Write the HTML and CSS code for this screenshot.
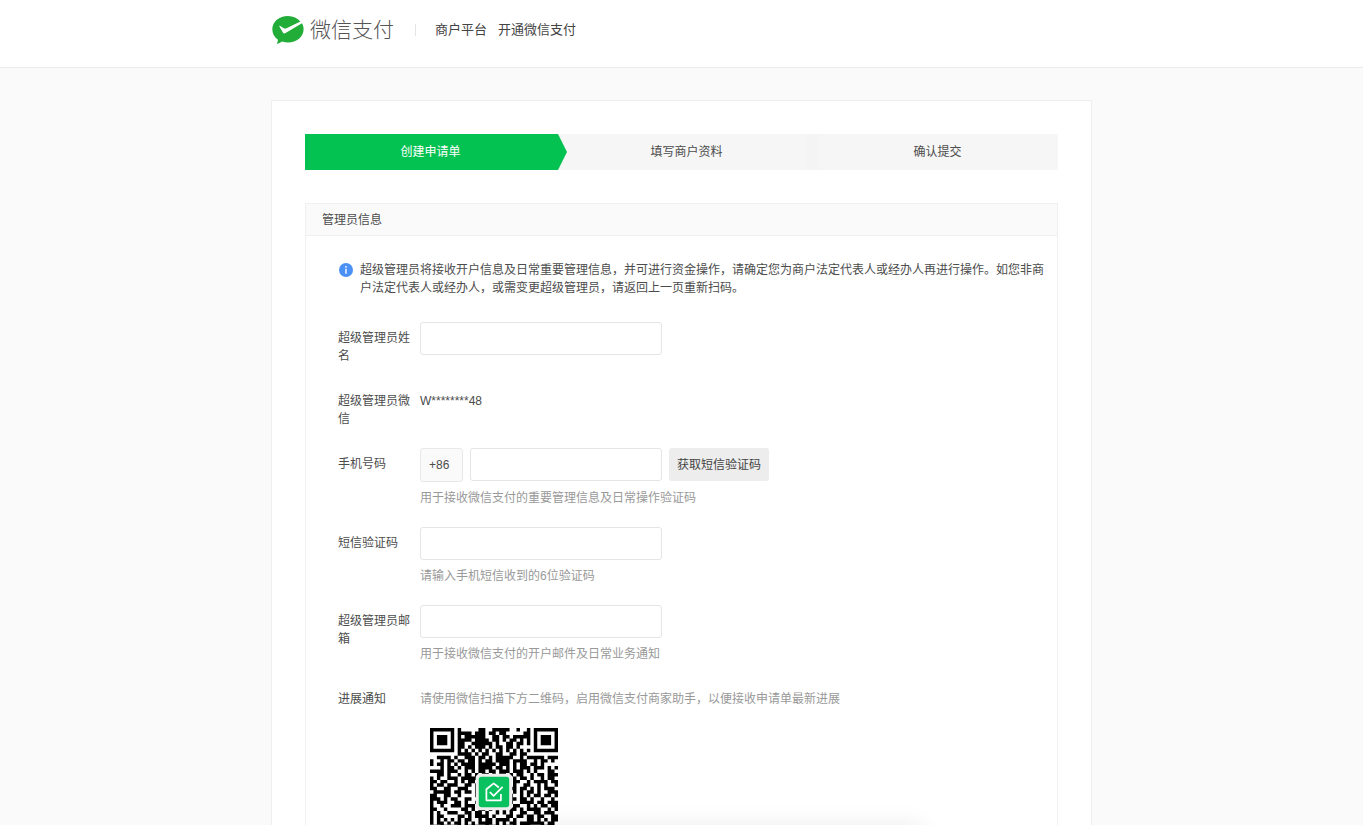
FILE: index.html
```html
<!DOCTYPE html>
<html lang="zh-CN">
<head>
<meta charset="utf-8">
<title>开通微信支付</title>
<link rel="stylesheet" href="styles.css">
</head>
<body>
<header class="header">
  <div class="header-inner">
    <a class="logo" href="#">
      <svg class="logo-icon" viewBox="0 0 32 28" aria-hidden="true">
        <path fill="#22ac38" d="M16 0C7.200 0 0.300 5.700 0.300 13.200c0 4.300 2.200 8 5.700 10.500L5.200 27.300c-.1.500.3.700.7.500l4.300-2.300c1.800.6 3.800.9 5.800.9 8.700 0 15.600-5.700 15.600-13.200 0-2.100-.6-4.100-1.600-5.900L13.600 17c-1.200.7-2.100.5-2.700-.6L7.400 10.600c-.3-.6.3-1 .8-.7l3.600 2.300c.7.4 1.400.5 2.100.2L28.400 5.600C25.500 2.200 21.100 0 16 0z"/>
      </svg>
      <span class="logo-text">微信支付</span>
    </a>
    <nav class="header-nav">
      <a href="#">商户平台</a>
      <span>开通微信支付</span>
    </nav>
  </div>
</header>

<main class="card">
  <ol class="steps">
    <li class="step step-active">创建申请单</li>
    <li class="step step-next">填写商户资料</li>
    <li class="step">确认提交</li>
  </ol>

  <section class="panel">
    <h2 class="panel-title">管理员信息</h2>
    <form class="panel-body">
      <div class="notice">
        <svg class="notice-icon" viewBox="0 0 14 14" aria-hidden="true">
          <circle cx="7" cy="7" r="7" fill="#4a90f5"/>
          <circle cx="7" cy="3.800" r="0.900" fill="#fff"/>
          <path d="M6.300 5.800h1.400v5H6.300z" fill="#fff"/>
        </svg>
        <p>超级管理员将接收开户信息及日常重要管理信息，并可进行资金操作，请确定您为商户法定代表人或经办人再进行操作。如您非商户法定代表人或经办人，或需变更超级管理员，请返回上一页重新扫码。</p>
      </div>

      <div class="row">
        <label class="label" for="admin-name">超级管理员姓名</label>
        <div class="field"><input class="input" id="admin-name" type="text"></div>
      </div>

      <div class="row">
        <span class="label">超级管理员微信</span>
        <div class="field"><span class="value">W********48</span></div>
      </div>

      <div class="row">
        <label class="label" for="phone">手机号码</label>
        <div class="field">
          <div class="controls">
            <div class="phone">
              <span class="prefix">+86</span>
              <input class="input" id="phone" type="tel">
            </div>
            <button class="button" type="button">获取短信验证码</button>
          </div>
          <p class="hint">用于接收微信支付的重要管理信息及日常操作验证码</p>
        </div>
      </div>

      <div class="row">
        <label class="label" for="sms-code">短信验证码</label>
        <div class="field">
          <input class="input" id="sms-code" type="text">
          <p class="hint">请输入手机短信收到的6位验证码</p>
        </div>
      </div>

      <div class="row">
        <label class="label" for="email">超级管理员邮箱</label>
        <div class="field">
          <input class="input" id="email" type="email">
          <p class="hint">用于接收微信支付的开户邮件及日常业务通知</p>
        </div>
      </div>

      <div class="row">
        <span class="label">进展通知</span>
        <div class="field">
          <p class="hint">请使用微信扫描下方二维码，启用微信支付商家助手，以便接收申请单最新进展</p>
          <svg class="qr" viewBox="0 0 37 37" role="img" aria-label="二维码">
            <path id="qr-modules" fill="#000"/>
            <rect x="13.200" y="13.200" width="10.600" height="10.600" rx="1.200" fill="#eee"/>
            <rect x="14.100" y="14.100" width="8.800" height="8.800" rx="0.800" fill="#0ac160"/>
            <path d="M19.900 17.200l-1.500-1.200-2.100 1.700v3.200h4.200v-1.800M17.300 18.500l1.100 1.100 2.600-2.600" fill="none" stroke="#fff" stroke-width="0.500" stroke-linejoin="round"/>
          </svg>
        </div>
      </div>
    </form>
  </section>
</main>
<div class="bottom-sheet"></div>
<script src="qr.js"></script>
</body>
</html>
```

FILE: styles.css
```css
* {
  box-sizing: border-box;
}

body {
  margin: 0;
  background: #fafafa;
  color: #4c4c4c;
  font: 12px/18px "Liberation Sans", "Noto Sans CJK SC", sans-serif;
}

p, h2, ol {
  margin: 0;
  padding: 0;
}

a {
  color: inherit;
  text-decoration: none;
}

.header {
  background: #fff;
  border-bottom: 1px solid #ebebeb;
}

.header-inner {
  display: flex;
  align-items: center;
  max-width: 819px;
  height: 67px;
  margin: 0 auto;
  padding-bottom: 7px;
}

.logo {
  display: flex;
  align-items: center;
  gap: 6px;
  padding-right: 21px;
}

.logo-icon {
  width: 32px;
  height: 28px;
}

.logo-text {
  font-size: 21px;
  font-weight: 300;
  line-height: 30px;
  color: #555;
}

.header-nav {
  position: relative;
  display: flex;
  gap: 11px;
  padding-left: 20px;
  font-size: 13px;
  color: #444;
}

.header-nav::before {
  content: "";
  position: absolute;
  left: 0;
  top: 3px;
  width: 1px;
  height: 12px;
  background: #e4e4e4;
}

.card {
  max-width: 821px;
  margin: 32px auto;
  padding: 33px;
  background: #fff;
  border: 1px solid #efeff1;
}

.steps {
  display: grid;
  grid-template-columns: repeat(3, 1fr);
  margin-bottom: 33px;
  list-style: none;
  background: #f6f6f6;
}

.step {
  position: relative;
  padding-left: 10px;
  line-height: 36px;
  text-align: center;
}

.step-active {
  padding-left: 0;
  background: #04c251;
  color: #fff;
}

.step-active::after {
  content: "";
  position: absolute;
  z-index: 1;
  left: calc(100% - 1px);
  top: 0;
  width: 12px;
  height: 100%;
  background: #04c251;
  clip-path: polygon(0 0, 3px 0, 100% 50%, 3px 100%, 0 100%);
}

.step-next::after {
  content: "";
  position: absolute;
  left: 100%;
  top: 0;
  width: 11px;
  height: 100%;
  background: #f4f4f4;
}

.panel {
  border: 1px solid #f0f0f0;
}

.panel-title {
  padding: 7px 16px 6px;
  background: #fafafa;
  border-bottom: 1px solid #f0f0f0;
  font-size: 12px;
  font-weight: 400;
  line-height: 18px;
}

.panel-body {
  display: flex;
  flex-direction: column;
  gap: 20px;
  padding: 25px 10px 32px 32px;
}

.notice {
  display: flex;
  gap: 7px;
  margin-bottom: 5px;
}

.notice-icon {
  flex: none;
  width: 14px;
  height: 14px;
  margin: 2px 0 0 1px;
}

.row {
  display: flex;
  gap: 10px;
}

.label {
  flex: none;
  width: 72px;
  padding-top: 7px;
}

.field {
  flex: 1;
}

.value {
  display: block;
  padding-top: 7px;
}

.controls {
  display: flex;
  gap: 7px;
}

.phone {
  display: flex;
  gap: 7px;
  width: 242px;
}

.input {
  display: block;
  width: 242px;
  min-width: 0;
  height: 33px;
  padding: 0 8px;
  background: #fff;
  border: 1px solid #e5e5e5;
  border-radius: 3px;
  font: inherit;
  color: inherit;
}

.prefix {
  flex: none;
  width: 43px;
  padding: 0 8px;
  background: #fafafa;
  border: 1px solid #e8e8e8;
  border-radius: 3px;
  line-height: 32px;
}

.button {
  height: 33px;
  padding: 0 8px;
  background: #ededed;
  border: 0;
  border-radius: 3px;
  font: inherit;
  color: #444;
}

.hint {
  padding-top: 7px;
  color: #999;
}

.qr {
  display: block;
  width: 128px;
  height: 128px;
  margin: 20px 0 0 10px;
}

.bottom-sheet {
  position: fixed;
  left: 50%;
  top: 100%;
  width: 480px;
  height: 60px;
  margin-left: -240px;
  box-shadow: 0 0 24px rgba(0, 0, 0, 0.08);
}
```

FILE: qr.js
```javascript
const rows = [
  "#######.#.....##..#####..#..#.#######",
  "#.....#.####.###.##.##.....##.#.....#",
  "#.###.#.#.######..##.##.#####.#.###.#",
  "#.###.#.####.####.##.#.##.#.#.#.###.#",
  "#.###.#.##..######.#..##.##.#.#.###.#",
  "#.....#.##.#.###.#.##.##.#....#.....#",
  "#######.#.#.#.#.#.#.#.#.#.#.#.#######",
  "........####.#.##..##..##.##.........",
  "..####.#..###.##.#.#####..#.#####.###",
  "#..#.##.##.##.#.##.####.####..#.##.#.",
  "#.##.#.#.####.#####.###.#.##.##.#....",
  "...#.##.#.###.####.##.#.#.###.###.#.#",
  "####.###..#.#.##.##.###.###.#.#...##.",
  "..##.#..#.##.#.##.#.##.#.##..#.##.###",
  "#.#..###.#####.######.#.#.##.#..#.##.",
  "##.##..#.#.##.##.##.###.##..#.####.##",
  "#.##.###..##.#.####.##..#..##..#.#..#",
  "##..##..###..#.######.###.##.#.#.###.",
  ".#####.##.##.#..##.#.#..#.#.##.#..###",
  "##..##..#....#.#.##.##.#..#.#.##.##.#",
  "###.#.##..##..#.###.#..##.##.#..#..#.",
  "#.###..##.#..##.##.#.#.#..####.##.###",
  "#..#..###.###.#...##.##.##..#.#.##.##",
  "##..#....##.#.##.#.#.#.##.#.####..#.#",
  "#.#..###..##.##.#..#.#.#..##..##.###.",
  "#.##....##.#.####.#...##.##.##.##..##",
  "#.#.#.#.#.##..#.##.####.#...##.#.#.##",
  "#.##.#.##.#.#.####.#.#.##.#######.##.",
  ".#.##.#.#.####..#.##.##.#.###...####.",
  "........#.#.##.##.#..##.#.#.#...#.##.",
  "#######.##.#.#.###.##.#..##.#.#.##.##",
  "#.....#.#.##.##..#.#.##.#.###...#..#.",
  "#.###.#..#.##.#.##.##.##.##.#####.##.",
  "#.###.#.##..##.#.##..#.##..#.##.#.#.#",
  "#.###.#..##.#.##.#.##.#.##.##.##..##.",
  "#.....#.#.##.#.##.##.#.#.##..#.##.#.#",
  "#######.##.#.##.#.##.##.##.#.##.##.#."
];

let path = "";
rows.forEach((row, y) => {
  for (const run of row.matchAll(/#+/g)) {
    const w = run[0].length;
    path += `M${run.index} ${y}h${w}v1h-${w}z`;
  }
});
document.getElementById("qr-modules").setAttribute("d", path);
```
